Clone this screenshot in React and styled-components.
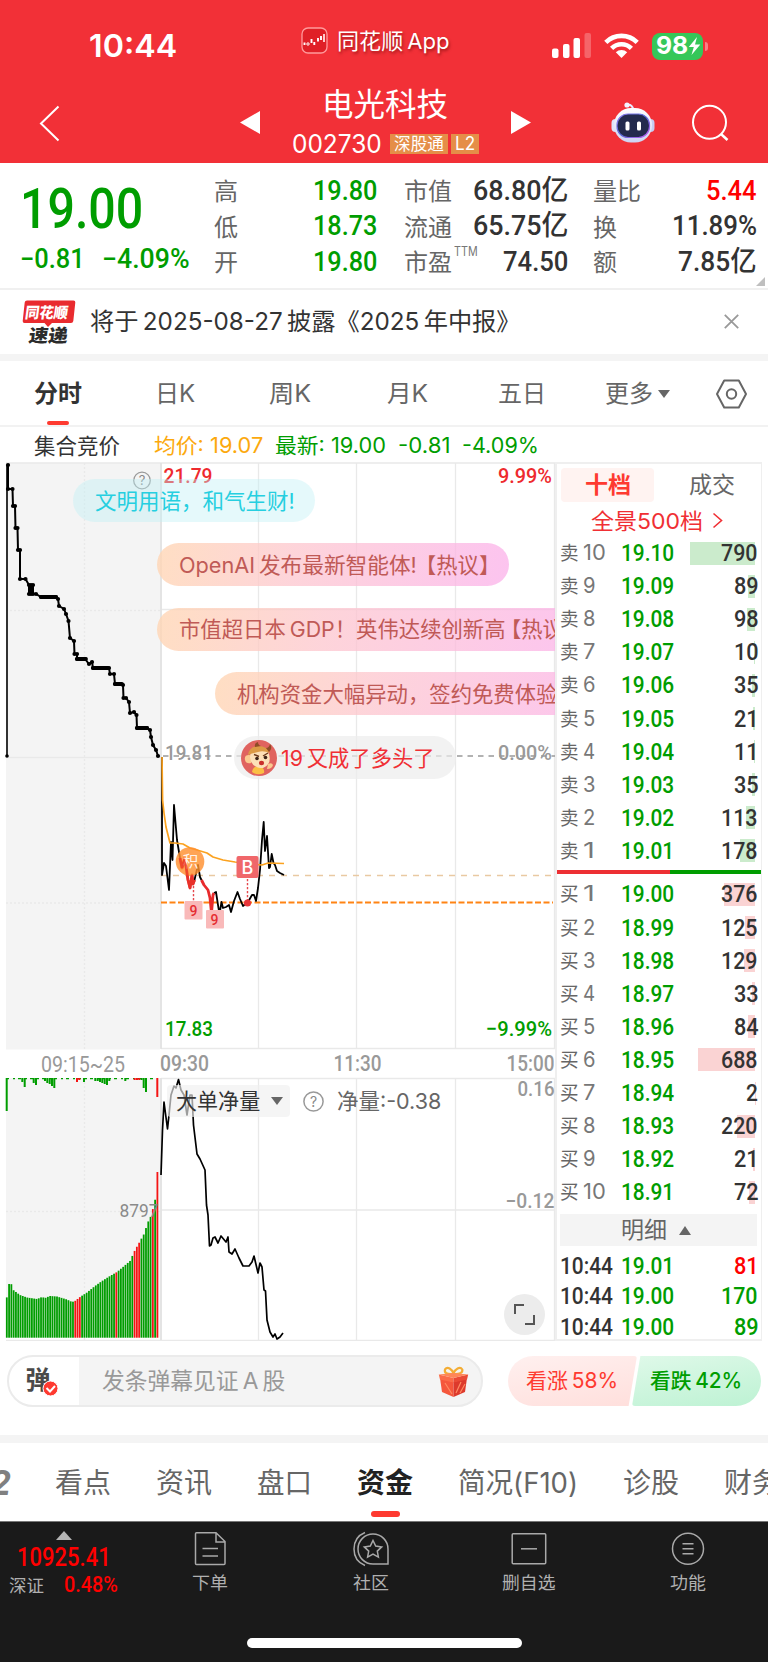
import React, { useLayoutEffect, useRef, useState } from "react";
import styled, { createGlobalStyle, css } from "styled-components";

const SANS = `Inter, "Noto Sans CJK SC", sans-serif`;
const DIN = `Roboto, "Noto Sans CJK SC", sans-serif`;
const GREEN = "#009d00";
const RED = "#f02f34";

const GlobalStyle = createGlobalStyle`
  *, *::before, *::after { box-sizing: border-box; }
  body { margin: 0; background: #fff; font-family: ${SANS}; color: #333; }
  svg { display: block; flex: none; }
`;

/* Text that is condensed or stretched to an exact advance width. */
const FitBox = styled.span`
  display: inline-block;
  flex: none;
  white-space: nowrap;
  text-align: left;
`;
const FitInner = styled.span`
  display: inline-block;
  white-space: pre;
  transform-origin: 0 50%;
`;
function Fit({ w, children, className }) {
  const ref = useRef(null);
  const [scale, setScale] = useState(1);
  useLayoutEffect(() => {
    const natural = ref.current.offsetWidth;
    if (natural) setScale(w / natural);
  }, [w, children]);
  return (
    <FitBox className={className} style={{ width: w }}>
      <FitInner ref={ref} style={{ transform: `scaleX(${scale})` }}>{children}</FitInner>
    </FitBox>
  );
}

const Label = styled(Fit)`
  font-family: ${SANS};
  font-size: ${(p) => p.$size}px;
  font-weight: ${(p) => p.$weight || 400};
  line-height: ${(p) => p.$lh || 30}px;
  height: ${(p) => p.$lh || 30}px;
  color: ${(p) => p.$color || "#333"};
  margin-left: ${(p) => p.$ml || 0}px;
  margin-top: ${(p) => p.$mt || 0}px;
`;
const Num = styled(Label)`
  font-family: ${DIN};
  font-weight: ${(p) => p.$weight || 500};
`;

const Page = styled.main`
  width: 768px;
  height: 1662px;
  overflow: hidden;
  background: #fff;
  display: flex;
  flex-direction: column;
`;

/* ---------- header ---------- */
const Header = styled.header`
  height: 163px;
  flex: none;
  background: #f23037;
  color: #fff;
`;
const StatusBar = styled.div`
  height: 84px;
  padding: 8px 0 0 89px;
  display: flex;
  align-items: center;
`;
const AppName = styled.div`
  display: flex;
  align-items: center;
  gap: 9px;
  margin: -11px 0 0 124px;
  text-shadow: 1px 2px 3px rgba(90, 0, 0, 0.55);
`;
const Signals = styled.div`
  display: flex;
  align-items: center;
  margin-left: 102px;
  gap: 13px;
`;
const Battery = styled.div`
  width: 51px;
  height: 27px;
  border-radius: 8px;
  background: #35c759;
  display: flex;
  align-items: center;
  padding-left: 4px;
`;
const BatteryNub = styled.i`
  width: 3px;
  height: 9px;
  margin-left: -11px;
  border-radius: 0 3px 3px 0;
  background: #f97f86;
`;
const NavBar = styled.div`
  height: 79px;
  display: flex;
  align-items: flex-start;
  padding-left: 39px;
`;
const StockTitle = styled.div`
  width: 190px;
  margin-left: 30px;
  display: flex;
  flex-direction: column;
  align-items: center;
`;
const CodeRow = styled.div`
  display: flex;
  align-items: center;
  gap: 3px;
  height: 30px;
  margin-top: 4px;
`;
const Badge = styled.span`
  height: 20px;
  background: #e58e48;
  padding: 0 4px;
  margin-left: ${(p) => p.$ml || 0}px;
`;
const NavIcon = styled.span`
  margin: ${(p) => p.$mt}px 0 0 ${(p) => p.$ml || 0}px;
`;

/* ---------- quote ---------- */
const Quote = styled.section`
  height: 127px;
  flex: none;
  border-bottom: 2px solid #f0f0f0;
  display: grid;
  grid-template-columns: 214px 163px 27px 164px 25px 164px;
  position: relative;
`;
const PriceBlock = styled.div`
  padding: 16px 0 0 20px;
`;
const PriceMoves = styled.div`
  display: flex;
  gap: 17px;
  margin-top: 2px;
`;
const QuoteCol = styled.div`
  grid-column: ${(p) => p.$col};
  padding-top: 10px;
`;
const QuoteRow = styled.div`
  height: 35.6px;
  display: flex;
  align-items: center;
  justify-content: space-between;
`;
const QuoteName = styled.span`
  display: flex;
  align-items: center;
  margin-top: 3px;
`;
const Corner = styled.i`
  position: absolute;
  right: 3px;
  bottom: 2px;
  border-left: 9px solid transparent;
  border-bottom: 9px solid #bfbfbf;
`;

/* ---------- notice ---------- */
const Notice = styled.section`
  height: 71px;
  flex: none;
  display: flex;
  align-items: center;
  padding: 0 29px 1px 22px;
  border-bottom: 7px solid #f4f4f4;
`;
const Spacer = styled.span`
  flex: 1;
`;

/* ---------- chart tabs ---------- */
const ChartTabs = styled.nav`
  height: 66px;
  flex: none;
  display: flex;
  padding: 18px 0 0 34px;
  border-bottom: 2px solid #f2f2f2;
`;
const TabCell = styled.div`
  display: flex;
  flex-direction: column;
  align-items: center;
  margin-left: ${(p) => p.$ml || 0}px;
`;
const Underline = styled.i`
  width: ${(p) => p.$w}px;
  height: ${(p) => p.$h}px;
  border-radius: 3px;
  background: #fe3a30;
  margin-top: ${(p) => p.$mt}px;
`;
const InfoRow = styled.div`
  height: 35px;
  flex: none;
  display: flex;
  align-items: center;
  padding: 2px 0 0 34px;
`;

/* ---------- chart ---------- */
const Board = styled.section`
  height: 879px;
  flex: none;
  display: flex;
`;
const ChartPane = styled.div`
  width: 555px;
  position: relative;
  overflow: hidden;
`;
const pillSkins = {
  cyan: css`background: rgba(190, 240, 246, 0.4);`,
  warm: css`background: linear-gradient(100deg, rgba(255, 214, 180, 0.8) 0%, rgba(253, 198, 205, 0.75) 38%, rgba(251, 176, 234, 0.75) 100%);`,
  grey: css`background: rgba(237, 237, 237, 0.7);`,
};
const Pill = styled.div`
  position: absolute;
  left: ${(p) => p.$x}px;
  top: ${(p) => p.$y - 462}px;
  width: ${(p) => p.$w}px;
  height: 43px;
  border-radius: 22px;
  display: flex;
  align-items: center;
  padding-left: ${(p) => p.$pad || 22}px;
  ${(p) => pillSkins[p.$skin]}
`;
const IndicatorBar = styled.div`
  position: absolute;
  left: 167px;
  top: 623px;
  height: 32px;
  display: flex;
  align-items: center;
`;
const IndicatorPick = styled.div`
  width: 123px;
  height: 32px;
  border-radius: 4px;
  background: rgba(239, 239, 239, 0.65);
  display: flex;
  align-items: center;
  padding-left: 9px;
  margin-right: 13px;
`;
const Triangle = styled.i`
  border-left: ${(p) => p.$w / 2}px solid transparent;
  border-right: ${(p) => p.$w / 2}px solid transparent;
  border-${(p) => (p.$up ? "bottom" : "top")}: ${(p) => p.$h}px solid ${(p) => p.$c || "#666"};
  margin-left: ${(p) => p.$ml || 0}px;
  margin-top: ${(p) => p.$mt || 0}px;
  height: ${(p) => p.$h}px;
`;
const ExpandButton = styled.button`
  position: absolute;
  left: 504px;
  top: 832px;
  width: 41px;
  height: 41px;
  padding: 9px;
  border: 0;
  border-radius: 50%;
  background: #ececec;
`;

/* ---------- order book ---------- */
const Book = styled.aside`
  width: 207px;
  border: 2px solid #efefef;
  border-right-width: 1.5px;
  display: flex;
  flex-direction: column;
  padding-top: 3.5px;
`;
const BookTabs = styled.div`
  display: flex;
  flex: none;
  height: 34px;
  padding-left: 4px;
`;
const BookTab = styled.div`
  width: 93px;
  border-radius: 4px;
  display: flex;
  align-items: center;
  justify-content: center;
  padding-left: 1px;
  background: ${(p) => (p.$on ? "#fff3f1" : "transparent")};
  margin-right: 11px;
  & + & { margin: 0; }
`;
const DepthLink = styled.div`
  display: flex;
  flex: none;
  align-items: center;
  padding-left: 34px;
  height: 35px;
  padding-top: 3px;
`;
const BookRow = styled.div`
  height: 33.1px;
  flex: none;
  display: grid;
  grid-template-columns: 61px 1fr auto;
  align-items: center;
  padding: 0 3px;
  position: relative;
`;
const VolumeBar = styled.i`
  position: absolute;
  right: 6px;
  top: 5px;
  height: 23px;
  background: ${(p) => (p.$sell ? "#cbebcc" : "#fad3d3")};
`;
const Cell = styled.span`
  position: relative;
  display: flex;
`;
const Ratio = styled.div`
  height: 4px;
  flex: none;
  margin: 2.5px 0 4px;
  background: linear-gradient(90deg, #ed2f33 0 55.5%, ${GREEN} 55.5%);
`;
const DetailToggle = styled.div`
  height: 32px;
  flex: none;
  margin: 5.5px 4px 4.5px 3px;
  background: #f4f4f4;
  display: flex;
  align-items: center;
  padding-left: 61px;
`;
const TradeRow = styled.div`
  height: 30.3px;
  flex: none;
  display: grid;
  grid-template-columns: 61px 1fr auto;
  align-items: center;
  padding: 0 3px 0 3px;
`;

/* ---------- barrage & vote ---------- */
const BarrageRow = styled.section`
  height: 102px;
  flex: none;
  border-bottom: 8px solid #f4f4f4;
  display: flex;
  padding: 14px 7px 0 7px;
`;
const BarrageInput = styled.div`
  width: 476px;
  height: 52px;
  border: 2px solid #ebebeb;
  border-radius: 26px;
  background: linear-gradient(90deg, #fff 70px, #f4f4f4 70px);
  display: flex;
  align-items: center;
  padding: 0 12px 0 15px;
`;
const VoteGroup = styled.div`
  display: flex;
  margin-left: 25px;
  height: 50px;
  margin-top: 1px;
`;
const Vote = styled.div`
  height: 50px;
  width: 129px;
  margin-left: ${(p) => (p.$up ? 0 : -5)}px;
  padding-left: 18px;
  display: flex;
  align-items: center;
  background: ${(p) => (p.$up ? "linear-gradient(170deg,#fff0ef,#ffdfdc)" : "linear-gradient(170deg,#dff9e9,#bdf2d3)")};
  border-radius: ${(p) => (p.$up ? "25px 3px 3px 25px" : "3px 25px 25px 3px")};
  clip-path: ${(p) => (p.$up ? "polygon(0 0,100% 0,93.5% 100%,0 100%)" : "polygon(6.5% 0,100% 0,100% 100%,0 100%)")};
`;

/* ---------- section tabs ---------- */
const SectionTabs = styled.nav`
  height: 78px;
  flex: none;
  display: flex;
  gap: 45px;
  overflow: hidden;
  padding-top: 20px;
`;
const ClippedTab = styled.div`
  width: 11px;
  margin-right: -1px;
  display: flex;
  flex: none;
  justify-content: flex-end;
  font: italic 700 34px/40px ${SANS};
  color: #808080;
`;

/* ---------- bottom bar ---------- */
const BottomBar = styled.footer`
  flex: 1;
  background: #1a1a1a;
  display: flex;
  flex-direction: column;
  align-items: center;
  border-top: 1px solid #777;
`;
const BottomItems = styled.div`
  width: 768px;
  height: 116px;
  display: flex;
`;
const IndexCell = styled.div`
  width: 127px;
  display: flex;
  flex-direction: column;
  align-items: center;
  padding: 9px 0 0 1px;
`;
const IndexRow = styled.div`
  display: flex;
  gap: 20px;
  margin-left: -1px;
`;
const ActionCell = styled.div`
  width: 160px;
  margin-left: ${(p) => p.$ml || 0}px;
  display: flex;
  flex-direction: column;
  align-items: center;
  padding-top: 9px;
`;
const HomeIndicator = styled.i`
  width: 275px;
  height: 10px;
  border-radius: 5px;
  background: #fff;
`;

/* ---------- drawings ---------- */
const AppIcon = () => (
  <svg width="27" height="27" viewBox="0 0 27 27">
    <rect x="1" y="1" width="25" height="25" rx="6" fill="#e02027" stroke="#ff9a9c" strokeWidth="1.300" />
    <path d="M3.500 18v-2.500M10.500 16v-4M13.300 18v-3M17 14.500v-3.500M20 13v-4" stroke="#fff" strokeWidth="1.900" />
    <circle cx="7" cy="17" r="1.200" fill="none" stroke="#fff" />
    <path d="M23 15V7" stroke="#ffc9c9" strokeWidth="2" />
  </svg>
);
const SignalIcon = () => (
  <svg width="39" height="26" viewBox="0 0 39 26" fill="#fff">
    <rect x="0" y="15.500" width="6.500" height="9.500" rx="2" />
    <rect x="11" y="11" width="6.500" height="14" rx="2" />
    <rect x="21.500" y="5" width="6.500" height="20" rx="2" />
    <rect x="32.500" y="0" width="6.500" height="25" rx="2" opacity=".25" />
  </svg>
);
const WifiIcon = () => (
  <svg width="35" height="26" viewBox="0 0 35 26" fill="none" stroke="#fff" strokeWidth="4.600">
    <path d="M1.800 9.300a22.500 22.500 0 0 1 31.400 0" />
    <path d="M7.600 15.300a14.200 14.200 0 0 1 19.800 0" />
    <path d="M17.500 25l-5.700-5.700a8.200 8.200 0 0 1 11.400 0z" fill="#fff" stroke="none" />
  </svg>
);
const BoltIcon = () => (
  <svg width="13" height="20" viewBox="0 0 13 20"><path d="M9 1L.8 11h5L3.500 19 12.300 8.500H7z" fill="#fff" /></svg>
);
const RobotIcon = () => (
  <svg width="44" height="41" viewBox="0 0 44 41">
    <defs>
      <linearGradient id="shell" x1="0" y1="0" x2="0" y2="1"><stop offset="0" stopColor="#fff" /><stop offset="1" stopColor="#cdd3f3" /></linearGradient>
      <linearGradient id="rim" x1="0" y1="0" x2="1" y2="1"><stop offset="0" stopColor="#8f7cf0" /><stop offset=".5" stopColor="#5a6bd8" /><stop offset="1" stopColor="#c25cf0" /></linearGradient>
    </defs>
    <path d="M16 3q5-1 6.500 5" stroke="#e8ebff" strokeWidth="2" fill="none" />
    <circle cx="16" cy="3" r="2.600" fill="#f3f4ff" />
    <rect x=".5" y="17" width="8" height="13" rx="4" fill="#dfe3fa" />
    <rect x="35.500" y="17" width="8" height="13" rx="4" fill="#c6cdf2" />
    <rect x="3" y="6" width="38" height="34.500" rx="17" fill="url(#shell)" />
    <rect x="6" y="12" width="32.500" height="23.500" rx="11" fill="#232a4d" stroke="url(#rim)" strokeWidth="1.200" />
    <rect x="14.500" y="19.500" width="4" height="9" rx="1.500" fill="#fff" />
    <rect x="26" y="19.500" width="4" height="9" rx="1.500" fill="#fff" />
  </svg>
);
const NewsLogo = () => (
  <svg width="54" height="46" viewBox="22 298 54 46">
    <path d="M27 299.500h46.500q2 0 1.800 2l-2 18.500q-.3 2-2.300 2H52l-4 4-3.500-4H24.500q-2 0-1.800-2l2-18.500q.3-2 2.300-2z" fill="#e92b2f" />
    <text x="69" y="317" transform="skewX(-8)" fontFamily={SANS} fontSize="15" fontWeight="900" fill="#fff" textLength="43" lengthAdjust="spacingAndGlyphs">同花顺</text>
    <text x="76" y="341" transform="skewX(-8)" fontFamily={SANS} fontSize="18" fontWeight="900" fill="#2b2b2b" textLength="39" lengthAdjust="spacingAndGlyphs">速递</text>
  </svg>
);
const HelpIcon = ({ size = 21 }) => (
  <svg width={size} height={size} viewBox="0 0 21 21" fill="none">
    <circle cx="10.500" cy="10.500" r="9.600" stroke="#999" strokeWidth="1.500" />
    <text x="10.500" y="15.600" textAnchor="middle" fontFamily={SANS} fontSize="14" fill="#888">?</text>
  </svg>
);
const Avatar = () => (
  <svg width="36" height="36" viewBox="0 0 36 36">
    <circle cx="18" cy="18" r="18" fill="#e0635f" />
    <path d="M11 32Q12 25 19 27q5 1 4 6-7 3-12-1z" fill="#fbbf45" />
    <path d="M4 20q-1-5 4-5 3 0 4 3l-2 5q-5 1-6-3zM27 24q4-2 5 1-1 4-6 4z" fill="#fbc98f" />
    <path d="M9 17Q9 9 17 8q8-1 11 6 3 10-6 14-12 0-13-11z" fill="#fce0b8" />
    <path d="M7 15Q8 7 16 6q9-1 13 7-7-3-12-1-5 1-10 3z" fill="#dc9a45" />
    <path d="M14 7q-1-4 3-5 0 3 3 4zM25 8q3 0 4-4 3 4-1 8z" fill="#8f4c26" />
    <path d="M13 14.500l5 2M22 16l5-3" stroke="#6b3a1c" strokeWidth="1.400" />
    <circle cx="16" cy="18.500" r="1.800" fill="#3a2317" /><circle cx="24.500" cy="17.500" r="1.800" fill="#3a2317" />
    <ellipse cx="20.500" cy="23" rx="2.600" ry="2.200" fill="#c92f2b" />
  </svg>
);
const GiftIcon = () => (
  <svg width="31" height="33" viewBox="0 0 31 33">
    <path d="M15.500 9C9 9.500 6 8 7 4.500 9.500 1 14 4 15.500 8.500 17 4 22 1 24.300 4.500 25 8 21 9.500 15.500 9z" fill="none" stroke="#f3ad35" strokeWidth="2.200" />
    <path d="M2 13l13.500 4v15L4 27z" fill="#f5573c" /><path d="M29 13l-13.500 4v15L27 27z" fill="#dd3a2c" />
    <path d="M.8 9.500l14.700 3.500-.0 4.500L2 14.500z" fill="#fb6b48" /><path d="M15.500 13L30.200 9.500 29 14.500l-13.500 3z" fill="#ea4a35" />
    <path d="M.8 9.500L15.500 8l14.700 1.500-14.700 3.500z" fill="#ff8658" />
    <path d="M7 18l7 11M18 28l5-11M22 28l5-9" stroke="#ff8a62" strokeWidth="1.200" />
  </svg>
);
const iconStroke = { fill: "none", stroke: "#a9a9a9", strokeWidth: 1.5 };
const OrderIcon = () => (
  <svg width="34" height="36" viewBox="0 0 34 36" {...iconStroke}>
    <path d="M3.500 1.800h19.500L32 10.500V32.500q0 1-1 1H3.500q-1 0-1-1V2.800q0-1 1-1zM23 2v9H32M9.500 17.500h15.500M9.500 25h15.500" />
  </svg>
);
const CommunityIcon = () => (
  <svg width="38" height="36" viewBox="0 0 38 36" {...iconStroke}>
    <path d="M36 33V18A15 15 0 1 0 21 33z" />
    <path d="M13 1.500Q2 6 2 18t11 16.500" />
    <path d="M21 9.500l2.700 5.500 6 .9-4.400 4.200 1.100 6-5.400-2.900-5.400 2.900 1.100-6-4.400-4.200 6-.9z" />
  </svg>
);
const RemoveIcon = () => (
  <svg width="36" height="36" viewBox="0 0 36 36" {...iconStroke}>
    <rect x="1.200" y="2.800" width="33.500" height="30" rx="1" /><path d="M10 17.800h16" />
  </svg>
);
const MenuIcon = () => (
  <svg width="36" height="36" viewBox="0 0 36 36" {...iconStroke}>
    <circle cx="18" cy="17.800" r="15.500" /><path d="M12.500 12.800h11M12.500 17.800h11M12.500 22.800h11" />
  </svg>
);

/* ---------- chart data, in page pixels ---------- */
const auction = [[8,465],[8,489],[12.5,489],[13,506],[15,506],[15.5,528],[17.5,528],[18,550],[20,550],[20,579],[25.5,579],[29,585],[29,594],[31,594],[31,585],[33,585],[33,594],[36,594],[41,597],[56,597],[58,599],[59,606],[64,609],[66,614],[68.5,621],[70,638],[74,641],[74.5,654],[77,654],[77,659],[85,659],[89,664],[92,662],[93,668],[109,668],[110,674],[114,674],[115,684],[123,685],[123.5,698],[126,698],[129,702],[130,713],[134,712],[136.5,715],[137,728],[147,728],[150,730],[151,737],[153,745],[156,750],[158,756]];
const priceA = "162,757 162,875 164,863 166,866 169,890 171,842 172.5,860 174,805 177,840 180,858";
const priceRed1 = "180,858 182,868 184,861 186,866 188,880 190,888 192,875 193,884 194.5,880";
const priceB = "194,882 198,865 200,877 201.5,880";
const priceRed2 = "201.5,880 204,885 208,890 210,898 211.5,913 213,895 214,893";
const priceC = "214,893 216,892 218,905 219.5,914 221.5,902 223,908 226,907 229,905 231,912 234,901 237.5,892 240,899 243,906 248,902 252,895 254,895 256,901 258,888 260,870 262,840 263.700,822 265,851 267,836 269,868 270,867 271.700,854 273.500,863 275,865 277,871 280,873 284,875";
const average = "162,757 162.600,800 164,813 166,827 170,843 175,843 183,844 190,848 197,850 207,853 213,857 223,860 235,862 250,864 262,865 268,863 284,863.500";
const netFlow = "161,1175 162.500,1130 164,1102 167.500,1129 169,1115 171,1095 174,1086 176,1088 178.500,1079.500 181,1090 184,1095 187,1115 190,1095 192,1095 193.500,1125 197,1154 200,1159 205,1170 206.500,1205 208,1215 209.500,1246 211,1245 213,1238 215,1237 218,1243 221,1236 226,1242 228,1237 229,1252 232,1254 235,1249 239,1258 243,1266 249,1266 252,1262 254,1256 258,1273 260,1263 262,1267 264,1290 265.500,1291 267,1320 270,1332 273,1337 275,1334 277,1339 280,1337 283,1333";
const volumeTops = [[6.7,1298],[9,1284],[11.3,1284],[13.3,1290],[20,1295],[27,1297.5],[37,1299],[42,1297],[45,1298],[50,1296],[57,1296.5],[67,1299.5],[72,1302],[75,1301],[80,1297],[87,1292.5],[95,1286],[102,1281],[110,1276],[117,1272],[123,1267],[130,1261],[135,1250],[139,1243],[144,1234],[148,1222],[151.5,1215],[153.3,1207],[155.3,1199],[158,1172]];
const topAt = (x) => {
  const i = Math.max(1, volumeTops.findIndex((p) => p[0] >= x));
  const [x0, y0] = volumeTops[i - 1];
  const [x1, y1] = volumeTops[i];
  return y0 + ((y1 - y0) * (x - x0)) / (x1 - x0);
};
const volumes = Array.from({ length: 67 }, (_, i) => {
  const x = 6.8 + (i * 150.6) / 66;
  const red = (x > 73.5 && x < 81) || (x > 115.5 && x < 117.7) || (x > 133.5 && x < 140.5) || (x > 152 && x < 154) || i === 66;
  return { x, y: i === 66 ? 1172 : topAt(Math.min(x, 157.9)), red };
});
const unmatched = [[6.7,33],[22.3,4],[24.7,9],[33.7,5],[36,7],[45,3],[47.3,5],[49.7,6],[52,8],[54.3,10],[77,4,1],[79.3,2,1],[84,4],[95.3,3],[97.7,3],[100,4],[102.3,5],[104.7,6],[107,7],[109.3,3],[125.3,3],[134.7,2,1],[137,2,1],[139.3,2,1],[141.6,2],[143.7,10],[146,14],[157.3,19,1]];

const T = ({ x, y, w, size, color, weight = 500, family = DIN, end, children }) => (
  <text x={end ? x - w : x} y={y + size * 0.355} textLength={w} lengthAdjust="spacingAndGlyphs" fontFamily={family} fontSize={size} fontWeight={weight} fill={color}>{children}</text>
);

const Chart = () => (
  <svg width="555" height="879" viewBox="0 462 555 879" fill="none">
    <rect x="6" y="463" width="154" height="586.500" fill="#f4f4f4" />
    <rect x="6" y="1078" width="154" height="259.500" fill="#f4f4f4" />
    <g stroke="#e9e9e9" strokeWidth="1.300">
      <path d="M6 463H555M6 757.500H160M161 609.500H555M161 1048.500H555M161 1078.500H555M161 1210H555M6 1340.500H555" />
      <path d="M161 463V1048M258.500 463V1048M356.500 463V1048M455.500 463V1048M554.500 463V1048M161 1078V1340M258.500 1078V1340M356.500 1078V1340M455.500 1078V1340M554.500 1078V1340" />
      <path d="M84.500 463V1049M84.500 1078V1340M6 610.500H160M6 903H160M6 1211.500H160" strokeDasharray="2 2" />
    </g>
    <path d="M161 463V1049M161 1078V1340" stroke="#e2e2e2" strokeWidth="1.600" />
    <path d="M163 756H555" stroke="#999" strokeWidth="1.300" strokeDasharray="5.500 5" />
    <path d="M161 875.500H553" stroke="#e9c9a2" strokeWidth="1.500" strokeDasharray="6 6" />
    <path d="M161 902.500H553" stroke="#ff8414" strokeWidth="1.800" strokeDasharray="6 2.500" />

    <path d="M7 757V465" stroke="#000" strokeWidth="1.600" />
    <circle cx="7" cy="756" r="1.800" fill="#000" />
    <polyline points={auction.join(" ")} stroke="#000" strokeWidth="2" />
    <path d="M41 597H56M77 659H86M93 668H108M115 684H122M137 728H147" stroke="#000" strokeWidth="3.800" strokeLinecap="round" />
    {auction.map(([x, y], i) => <circle key={i} cx={x} cy={y} r="2.100" fill="#000" />)}

    <g strokeLinejoin="round">
      <g stroke="#000" strokeWidth="1.800">
        <polyline points={priceA} /><polyline points={priceB} /><polyline points={priceC} />
      </g>
      <polyline points={average} stroke="#fba21f" strokeWidth="1.700" />
      <g stroke="#e82a2c" strokeWidth="2.800"><polyline points={priceRed1} /><polyline points={priceRed2} /></g>
    </g>
    <circle cx="190" cy="861.500" r="14.300" fill="#ff9030" fillOpacity=".82" />
    <text x="190.500" y="867" textAnchor="middle" fontFamily={SANS} fontSize="15.500" fill="#fff" fillOpacity=".9">积</text>
    <polyline points={priceRed1} stroke="#ea3428" strokeWidth="2.600" opacity=".75" />
    <path d="M193.500 886V901M247.500 879V900" stroke="#e5484d" strokeWidth="1.400" strokeDasharray="2.200 1.800" />
    <rect x="236.500" y="856" width="22" height="22" rx="2" fill="#f0676a" />
    <text x="247.500" y="873.500" textAnchor="middle" fontFamily={SANS} fontSize="18" fontWeight="500" fill="#fff">B</text>
    <circle cx="247.500" cy="903" r="3.600" fill="#e8363a" />
    <rect x="184.500" y="901" width="18" height="18.500" rx="1" fill="#f9b9b9" />
    <rect x="206" y="910" width="18" height="18.500" rx="1" fill="#f9b9b9" />
    <text x="193.500" y="915.500" textAnchor="middle" fontFamily={DIN} fontSize="14" fontWeight="500" fill="#e52d31">9</text>
    <text x="214.500" y="924.500" textAnchor="middle" fontFamily={DIN} fontSize="14" fontWeight="500" fill="#e52d31">9</text>

    <T x={163.500} y={476} w={49} size={21} color="#ee2a2e">21.79</T>
    <T x={552} y={476} w={54} size={21} color="#ee2a2e" end>9.99%</T>
    <T x={165} y={752.500} w={48} size={21} color="#999">19.81</T>
    <T x={552} y={752.500} w={54} size={21} color="#999" end>0.00%</T>
    <T x={165} y={1029} w={48} size={21} color={GREEN}>17.83</T>
    <T x={552} y={1029} w={66} size={21} color={GREEN} end>−9.99%</T>
    <T x={41} y={1064.500} w={84} size={21.500} color="#999" weight={400}>09:15~25</T>
    <T x={160} y={1063} w={49} size={21.500} color="#999">09:30</T>
    <T x={333.500} y={1063} w={48} size={21.500} color="#999">11:30</T>
    <T x={554.500} y={1063} w={48} size={21.500} color="#999" end>15:00</T>
    <T x={554.500} y={1089} w={37} size={20.500} color="#999" end>0.16</T>
    <T x={554.500} y={1201} w={49} size={20.500} color="#999" end>−0.12</T>

    {volumes.map((v, i) => <rect key={i} x={v.x - 0.9} y={v.y} width="1.800" height={1337.700 - v.y} fill={v.red ? "#f41414" : GREEN} />)}
    <path d="M6 1078.600H158" stroke={GREEN} strokeWidth="1.200" strokeDasharray="3 4 2 3" />
    {unmatched.map(([x, h, red], i) => <rect key={i} x={x - 1} y="1078" width="2" height={h} fill={red ? "#f41414" : GREEN} />)}
    <T x={119.500} y={1210.500} w={39} size={18} color="#8a8a8a" weight={400}>8797</T>
    <polyline points={netFlow} stroke="#000" strokeWidth="1.700" strokeLinejoin="round" />
    <g transform="translate(133 471)">
      <circle cx="9" cy="9.500" r="8.300" stroke="#999" strokeWidth="1.300" />
      <text x="9" y="14.300" textAnchor="middle" fontFamily={SANS} fontSize="13" fill="#888">?</text>
    </g>
  </svg>
);

const asks = [["10","19.10",790],["9","19.09",89],["8","19.08",98],["7","19.07",10],["6","19.06",35],["5","19.05",21],["4","19.04",11],["3","19.03",35],["2","19.02",113],["1","19.01",178]];
const bids = [["1","19.00",376],["2","18.99",125],["3","18.98",129],["4","18.97",33],["5","18.96",84],["6","18.95",688],["7","18.94",2],["8","18.93",220],["9","18.92",21],["10","18.91",72]];
const trades = [["19.01",81,"#ff0000"],["19.00",170,GREEN],["19.00",89,GREEN]];

const Levels = ({ side, rows }) =>
  rows.map(([n, price, vol]) => (
    <BookRow key={n}>
      <VolumeBar $sell={side === "卖"} style={{ width: (vol / 790) * 65 }} />
      <Cell>
        <Label w={19} $size={19.5} $color="#666">{side}</Label>
        <Label w={n.length * 10.500 + 2} $size={21} $color="#777" $ml={3.500}>{n}</Label>
      </Cell>
      <Cell><Num w={53} $size={24} $color={GREEN}>{price}</Num></Cell>
      <Cell><Num w={String(vol).length * 12.200} $size={24} $color="#333">{vol}</Num></Cell>
    </BookRow>
  ));

const quoteCols = [
  { col: 2, color: GREEN, rows: [["高", 24, "19.80", 64], ["低", 24, "18.73", 64], ["开", 24, "19.80", 64]] },
  { col: 4, color: "#333", rows: [["市值", 48, "68.80亿", 95], ["流通", 48, "65.75亿", 95], ["市盈", 48, "74.50", 65]] },
  { col: 6, color: "#333", rows: [["量比", 48, "5.44", 51, "#ff0000"], ["换", 24, "11.89%", 85], ["额", 24, "7.85亿", 79]] },
];

const actions = [
  ["下单", 36, OrderIcon, 3],
  ["社区", 36, CommunityIcon, 1],
  ["删自选", 54, RemoveIcon, -2],
  ["功能", 36, MenuIcon, -1],
];

export default function App() {
  return (
    <Page>
      <GlobalStyle />
      <Header>
        <StatusBar>
          <Label w={88} $size={31.500} $weight={600} $color="#fff">10:44</Label>
          <AppName>
            <AppIcon />
            <Label w={113} $size={21.500} $color="#fff">{"同花顺\u2009App"}</Label>
          </AppName>
          <Signals>
            <SignalIcon />
            <WifiIcon />
            <Battery>
              <Label w={32} $size={24} $weight={700} $color="#fff">98</Label>
              <BoltIcon />
            </Battery>
            <BatteryNub />
          </Signals>
        </StatusBar>
        <NavBar>
          <NavIcon $mt={21}>
            <svg width="22" height="37" viewBox="0 0 22 37"><path d="M19.500 1.500L2 18.500l17.500 17" fill="none" stroke="#fff" strokeWidth="2" /></svg>
          </NavIcon>
          <NavIcon $mt={27} $ml={179}>
            <svg width="20" height="23" viewBox="0 0 20 23"><path d="M20 0v23L0 11.500z" fill="#fff" /></svg>
          </NavIcon>
          <StockTitle>
            <Label w={126} $size={31.500} $lh={41} $color="#fff">电光科技</Label>
            <CodeRow>
              <Label w={90} $size={25} $color="#fff">002730</Label>
              <Badge $ml={5}><Label w={50} $size={17} $lh={20} $color="#fff">深股通</Label></Badge>
              <Badge><Label w={20} $size={18} $lh={20} $color="#fff">L2</Label></Badge>
            </CodeRow>
          </StockTitle>
          <NavIcon $mt={27} $ml={31}>
            <svg width="20" height="23" viewBox="0 0 20 23"><path d="M0 0v23l20-11.500z" fill="#fff" /></svg>
          </NavIcon>
          <NavIcon $mt={18} $ml={80}><RobotIcon /></NavIcon>
          <NavIcon $mt={20} $ml={36}>
            <svg width="38" height="38" viewBox="0 0 38 38" fill="none" stroke="#fff" strokeWidth="2"><circle cx="18.500" cy="18.300" r="16.500" /><path d="M30 30l6.500 6" strokeWidth="2.500" /></svg>
          </NavIcon>
        </NavBar>
      </Header>

      <Quote>
        <PriceBlock>
          <Num w={123} $size={55} $lh={60} $color={GREEN} $weight={500}>19.00</Num>
          <PriceMoves>
            <Num w={65} $size={27} $lh={36} $color={GREEN}>−0.81</Num>
            <Num w={88} $size={27} $lh={36} $color={GREEN}>−4.09%</Num>
          </PriceMoves>
        </PriceBlock>
        {quoteCols.map((c) => (
          <QuoteCol key={c.col} $col={c.col}>
            {c.rows.map(([name, w, value, vw, color]) => (
              <QuoteRow key={name}>
                <QuoteName>
                  <Label w={w} $size={24} $color="#666">{name}</Label>
                  {name === "市盈" && <Label w={24} $size={13} $color="#777" $lh={16} $ml={2} $mt={-24}>TTM</Label>}
                </QuoteName>
                <Num w={vw} $size={28} $color={color || c.color}>{value}</Num>
              </QuoteRow>
            ))}
          </QuoteCol>
        ))}
        <Corner />
      </Quote>

      <Notice>
        <NewsLogo />
        <Label w={431} $size={24} $ml={14}>{"将于\u20092025-08-27\u2009披露《2025\u2009年中报》"}</Label>
        <Spacer />
        <svg width="15" height="15" viewBox="0 0 15 15"><path d="M.8 .8l13.400 13.400M14.200 .8L.8 14.200" stroke="#999" strokeWidth="1.800" /></svg>
      </Notice>

      <ChartTabs>
        <TabCell>
          <Label w={48} $size={24} $weight={700}>分时</Label>
          <Underline $w={22} $h={5} $mt={12} />
        </TabCell>
        {[["日K", 40, 73], ["周K", 42, 74], ["月K", 41, 76], ["五日", 48, 70], ["更多", 48, 59]].map(([t, w, ml]) => (
          <TabCell key={t} $ml={ml}><Label w={w} $size={24} $color="#666">{t}</Label></TabCell>
        ))}
        <Triangle $w={12} $h={8} $ml={5} $mt={11} />
        <TabCell $ml={46}>
          <svg width="31" height="30" viewBox="0 0 31 30" fill="none" stroke="#666" strokeWidth="2"><path d="M8.200 1.500h14.600L30 15l-7.200 13.500H8.200L1 15z" strokeLinejoin="round" /><circle cx="15.500" cy="15" r="4.700" /></svg>
        </TabCell>
      </ChartTabs>
      <InfoRow>
        <Label w={86} $size={21.500}>集合竞价</Label>
        <Label w={109} $size={21} $color="#fca90d" $ml={34}>均价: 19.07</Label>
        <Label w={111} $size={21} $color={GREEN} $ml={12}>最新: 19.00</Label>
        <Label w={53} $size={21} $color={GREEN} $ml={12}>-0.81</Label>
        <Label w={77} $size={21} $color={GREEN} $ml={11}>-4.09%</Label>
      </InfoRow>

      <Board>
        <ChartPane>
          <Chart />
          <Pill $skin="cyan" $x={73} $y={479} $w={242}>
            <Label w={200} $size={21.300} $color="#26cfe0">文明用语，和气生财!</Label>
          </Pill>
          <Pill $skin="warm" $x={157} $y={543} $w={352}>
            <Label w={238} $size={21.300} $color="#c05a56">{"OpenAI\u2009发布最新智能体!"}</Label>
            <Label w={85} $size={21.300} $color="#c05a56" $ml={-2}>【热议】</Label>
          </Pill>
          <Pill $skin="warm" $x={157} $y={607.500} $w={432}>
            <Label w={327} $size={21.300} $color="#c05a56">{"市值超日本\u2009GDP！英伟达续创新高"}</Label>
            <Label w={85} $size={21.300} $color="#c05a56" $ml={-6}>【热议】</Label>
          </Pill>
          <Pill $skin="warm" $x={215} $y={672} $w={400}>
            <Label w={320} $size={21.300} $color="#c05a56">机构资金大幅异动，签约免费体验</Label>
          </Pill>
          <Pill $skin="grey" $x={234} $y={736} $w={222} $pad={7}>
            <Avatar />
            <Label w={154} $size={21.300} $color={RED} $ml={4}>{"19\u2009又成了多头了"}</Label>
          </Pill>
          <IndicatorBar>
            <IndicatorPick>
              <Label w={84} $size={21.300}>大单净量</Label>
              <Triangle $w={12} $h={8} $ml={11} />
            </IndicatorPick>
            <HelpIcon />
            <Label w={104} $size={21.300} $color="#666" $ml={13}>净量:-0.38</Label>
          </IndicatorBar>
          <ExpandButton aria-label="展开">
            <svg width="23" height="23" viewBox="0 0 23 23" fill="none" stroke="#555" strokeWidth="2"><path d="M2 11V2h9M21 12v9h-9" /></svg>
          </ExpandButton>
        </ChartPane>

        <Book>
          <BookTabs>
            <BookTab $on><Label w={46} $size={22.500} $weight={700} $color="#fe3a30">十档</Label></BookTab>
            <BookTab><Label w={46} $size={22.500} $color="#666">成交</Label></BookTab>
          </BookTabs>
          <DepthLink>
            <Label w={112} $size={22} $color={RED}>全景500档</Label>
            <svg width="12" height="17" viewBox="0 0 12 17" style={{ marginLeft: 9 }}><path d="M1.500 1.500l8 7-8 7" fill="none" stroke={RED} strokeWidth="1.600" /></svg>
          </DepthLink>
          <Levels side="卖" rows={asks} />
          <Ratio />
          <Levels side="买" rows={bids} />
          <DetailToggle>
            <Label w={46} $size={22.500} $color="#666">明细</Label>
            <Triangle $w={13} $h={9} $ml={12} $up />
          </DetailToggle>
          {trades.map(([price, vol, color], i) => (
            <TradeRow key={i}>
              <Num w={53} $size={24}>10:44</Num>
              <Num w={53} $size={24} $color={GREEN}>{price}</Num>
              <Num w={String(vol).length * 12.200} $size={24} $color={color}>{vol}</Num>
            </TradeRow>
          ))}
        </Book>
      </Board>

      <BarrageRow>
        <BarrageInput>
          <svg width="36" height="34" viewBox="24 1364 36 34">
            <text x="25.500" y="1388.500" fontFamily={SANS} fontSize="25" fontWeight="700" fill="#4a4a4a">弹</text>
            <circle cx="50.500" cy="1388.500" r="7.500" fill="#fe3a30" stroke="#fff" />
            <path d="M46.500 1388l3.500 3.500 5-5.500" fill="none" stroke="#fff" strokeWidth="2" />
          </svg>
          <Label w={183} $size={23} $color="#999" $ml={42}>{"发条弹幕见证\u2009A\u2009股"}</Label>
          <Spacer />
          <GiftIcon />
        </BarrageInput>
        <VoteGroup>
          <Vote $up><Label w={92} $size={21} $color="#fe3a30">{"看涨\u200958%"}</Label></Vote>
          <Vote><Label w={92} $size={21} $color={GREEN} $weight={500}>{"看跌\u200942%"}</Label></Vote>
        </VoteGroup>
      </BarrageRow>

      <SectionTabs>
        <ClippedTab>2</ClippedTab>
        {[["看点", 56], ["资讯", 56], ["盘口", 55], ["资金", 56, true], ["简况(F10)", 120], ["诊股", 56], ["财务", 56]].map(([t, w, on]) => (
          <TabCell key={t}>
            <Label w={w} $size={28} $lh={40} $weight={on ? 700 : 400} $color={on ? "#222" : "#666"}>{t}</Label>
            {on && <Underline $w={29} $h={6} $mt={8} />}
          </TabCell>
        ))}
      </SectionTabs>

      <BottomBar>
        <BottomItems>
          <IndexCell>
            <Triangle $w={16} $h={9} $up $c="#b5b5b5" />
            <Num w={94} $size={26} $lh={32} $color="#ff0000" $mt={1}>10925.41</Num>
            <IndexRow>
              <Label w={35} $size={17.500} $lh={24} $color="#b0b0b0" $mt={1}>深证</Label>
              <Num w={54} $size={22} $lh={24} $color="#ff0000">0.48%</Num>
            </IndexRow>
          </IndexCell>
          {actions.map(([t, w, Icon, ml]) => (
            <ActionCell key={t} $ml={ml}>
              <Icon />
              <Label w={w} $size={17.500} $lh={32} $color="#b0b0b0">{t}</Label>
            </ActionCell>
          ))}
        </BottomItems>
        <HomeIndicator />
      </BottomBar>
    </Page>
  );
}
